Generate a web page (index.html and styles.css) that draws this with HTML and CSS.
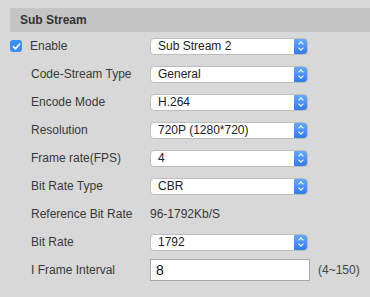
FILE: index.html
```html
<!DOCTYPE html>
<html>
<head lang="en">
    <meta charset="UTF-8">
    <title>Sub Stream</title>
    <link rel="stylesheet" href="styles.css">
</head>
<body>
<div id="panel">
    <div class="head">Sub Stream</div>
    <div class="row">
        <label class="check"><span class="box"><svg width="9" height="9" viewBox="0 0 9 9"><path d="M1.5 4.8 L3.6 6.8 L7.6 2" fill="none" stroke="#fff" stroke-width="1.6" stroke-linecap="round" stroke-linejoin="round"/></svg></span>Enable</label>
        <div class="sel"><span>Sub Stream 2</span><i class="arr"></i></div>
    </div>
    <div class="row">
        <div class="lab">Code-Stream Type</div>
        <div class="sel"><span>General</span><i class="arr"></i></div>
    </div>
    <div class="row">
        <div class="lab">Encode Mode</div>
        <div class="sel"><span>H.264</span><i class="arr"></i></div>
    </div>
    <div class="row">
        <div class="lab">Resolution</div>
        <div class="sel"><span>720P (1280*720)</span><i class="arr"></i></div>
    </div>
    <div class="row">
        <div class="lab">Frame rate(FPS)</div>
        <div class="sel"><span>4</span><i class="arr"></i></div>
    </div>
    <div class="row">
        <div class="lab">Bit Rate Type</div>
        <div class="sel"><span>CBR</span><i class="arr"></i></div>
    </div>
    <div class="row">
        <div class="lab">Reference Bit Rate</div>
        <div class="val">96-1792Kb/S</div>
    </div>
    <div class="row">
        <div class="lab">Bit Rate</div>
        <div class="sel"><span>1792</span><i class="arr"></i></div>
    </div>
    <div class="row">
        <div class="lab">I Frame Interval</div>
        <div class="inp">8</div>
        <div class="hint">(4~150)</div>
    </div>
</div>
</body>
</html>
```

FILE: styles.css
```css
*{
    margin: 0;
    padding: 0;
}
body{
    background: #d8d8d8;
    font-family: "Liberation Sans", Arial, sans-serif;
    font-size: 12px;
    color: #383838;
}
#panel{
    padding: 8px 0 0 10px;
}
.head{
    height: 24px;
    line-height: 24px;
    background: #c5c5c5;
    padding-left: 10px;
    font-weight: bold;
    font-size: 12px;
    color: #333;
}
.row{
    height: 28px;
    display: flex;
    align-items: center;
}
.lab{
    width: 119px;
    padding-left: 21px;
}
.check{
    width: 140px;
    display: flex;
    align-items: center;
}
.box{
    width: 12px;
    height: 12px;
    border-radius: 3px;
    background: #3b8ff0;
    display: flex;
    align-items: center;
    justify-content: center;
    margin-right: 8px;
}
.sel{
    width: 158px;
    height: 17px;
    box-sizing: border-box;
    background: #fff;
    border: 1px solid #bdbdbd;
    border-radius: 4px;
    display: flex;
    align-items: center;
    overflow: hidden;
}
.sel span{
    flex: 1;
    padding-left: 7px;
    font-size: 12px;
    color: #222;
}
.arr{
    width: 14px;
    height: 17px;
    margin-right: -1px;
    background: linear-gradient(#6aabf7, #2f78ea);
    position: relative;
}
.arr:before, .arr:after{
    content: "";
    position: absolute;
    left: 5px;
    width: 3px;
    height: 3px;
    border-left: 1px solid #fff;
    border-top: 1px solid #fff;
}
.arr:before{
    top: 4px;
    transform: rotate(45deg);
}
.arr:after{
    top: 8px;
    transform: rotate(225deg);
}
.inp{
    width: 160px;
    height: 22px;
    box-sizing: border-box;
    background: #fff;
    border: 1px solid #a8a8a8;
    font-size: 14px;
    line-height: 20px;
    padding-left: 5px;
    color: #111;
}
.hint{
    margin-left: 8px;
    color: #444;
}
```
